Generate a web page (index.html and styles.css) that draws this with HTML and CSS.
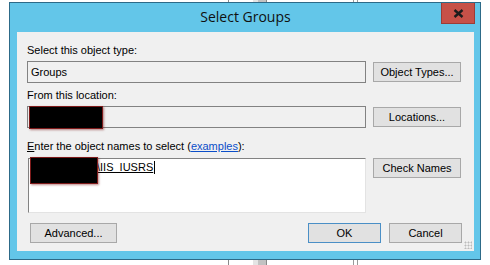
FILE: index.html
```html
<!DOCTYPE html>
<html lang="en">
  <head>
    <meta charset="UTF-8" />
    <meta name="viewport" content="width=device-width, initial-scale=1.0" />
    <title>Select Groups</title>
    <link rel="stylesheet" href="styles.css">
  </head>
  <body>
    <div class="ventana">
      <div class="titulo">
        <span class="titulo-texto">Select Groups</span>
        <button class="cerrar" title="Close">
          <svg width="11" height="9" viewBox="0 0 11 9">
            <path d="M1.5 1 L9.5 8 M9.5 1 L1.5 8" stroke="#1c1c1c" stroke-width="2.4" fill="none" />
          </svg>
        </button>
      </div>
      <div class="cliente">
        <label class="etiqueta">Select this object type:</label>
        <div class="fila">
          <div class="campo">Groups</div>
          <button class="boton"><u>O</u>bject Types...</button>
        </div>

        <label class="etiqueta etiqueta-2">From this location:</label>
        <div class="fila">
          <div class="campo">
            <span class="tapa tapa-1"></span>
          </div>
          <button class="boton"><u>L</u>ocations...</button>
        </div>

        <label class="etiqueta etiqueta-3"><u>E</u>nter the object names to select (<a href="#">examples</a>):</label>
        <div class="fila fila-nombres">
          <div class="nombres">
            <span class="nombre">\IIS_IUSRS</span><span class="cursor"></span>
            <span class="tapa tapa-2"></span>
          </div>
          <button class="boton"><u>C</u>heck Names</button>
        </div>

        <div class="acciones">
          <button class="boton boton-avanzado"><u>A</u>dvanced...</button>
          <div class="acciones-der">
            <button class="boton boton-ok">OK</button>
            <button class="boton boton-cancelar">Cancel</button>
          </div>
        </div>
        <span class="agarre"></span>
      </div>
    </div>
  </body>
</html>
```

FILE: styles.css
```css
:root {
  --azul: #63c6e9;
  --fondo: #f0f0f0;
  --borde-campo: #828282;
  --texto: #000000;
}

html {
  box-sizing: border-box;
  font-size: 11px;
}

*,
*::before,
*::after {
  box-sizing: border-box;
}

body {
  margin: 0;
  height: 265px;
  overflow: hidden;
  color: var(--texto);
  font-family: "Liberation Sans", Arial, sans-serif;
  background-color: #ffffff;
  background-image:
    linear-gradient(to right,
      transparent 228px, #8a8a8a 228px, #8a8a8a 229px, transparent 229px,
      transparent 253px, #e4e4e4 253px, #e4e4e4 258px, #c2c2c2 258px, #c2c2c2 266px, #8a8a8a 266px, #8a8a8a 267px, transparent 267px,
      transparent 353px, #9a9a9a 353px, #9a9a9a 354px, transparent 354px,
      transparent 357px, #9a9a9a 357px, #9a9a9a 358px, transparent 358px);
}

.ventana {
  margin: 2px 0 0 9px;
  width: 472px;
  height: 258px;
  background: var(--azul);
  border: 1px solid #2d6a88;
  padding: 0 6px 8px 7px;
  display: flex;
  flex-direction: column;
}

.titulo {
  position: relative;
  height: 29px;
  display: flex;
  align-items: center;
  justify-content: center;
}

.titulo-texto {
  font-family: "Open Sans", "Noto Sans", sans-serif;
  font-size: 14px;
  color: #101010;
  margin-top: -2px;
}

.cerrar {
  position: absolute;
  top: 0;
  right: -1px;
  width: 34px;
  height: 21px;
  border: 1px solid #9c3c36;
  border-top: none;
  background: #c65148;
  padding: 0;
  display: flex;
  align-items: center;
  justify-content: center;
}

.cliente {
  position: relative;
  flex: 1;
  background: var(--fondo);
  padding: 12px 12px 0 10px;
}

.etiqueta {
  display: block;
  height: 13px;
  line-height: 13px;
  margin-bottom: 4px;
}

.etiqueta-2 {
  margin-top: 6px;
}

.etiqueta-3 {
  margin-top: 12px;
  margin-bottom: 5px;
}

.etiqueta a {
  color: #0b4ec9;
}

.fila {
  display: flex;
  gap: 7px;
  align-items: flex-start;
}

.campo {
  position: relative;
  width: 339px;
  height: 22px;
  border: 1px solid var(--borde-campo);
  line-height: 20px;
  padding-left: 3px;
}

.boton {
  font-family: inherit;
  font-size: 11px;
  color: var(--texto);
  width: 88px;
  height: 20px;
  margin-top: 1px;
  padding: 0;
  background: #e1e1e1;
  border: 1px solid #a8a8a8;
  line-height: 18px;
}

.boton u {
  text-decoration: none;
}

.nombres {
  position: relative;
  width: 338px;
  height: 55px;
  margin-left: 1px;
  background: #ffffff;
  border-top: 1px solid #828282;
  border-left: 1px solid #828282;
  border-right: 1px solid #e3e3e3;
  border-bottom: 1px solid #e3e3e3;
  padding: 2px 0 0 68px;
  line-height: 13px;
}

.fila-nombres .boton {
  margin-top: 0;
}

.nombre {
  text-decoration: underline;
}

.cursor {
  display: inline-block;
  width: 1px;
  height: 13px;
  margin-left: 1px;
  vertical-align: top;
  background: #000;
}

.tapa {
  position: absolute;
  background: #000;
  border: 1px solid #7d1a1a;
  box-shadow: 1px 1px 2px rgba(120, 20, 20, 0.5);
}

.tapa-1 {
  left: 1px;
  top: -1px;
  width: 74px;
  height: 23px;
}

.tapa-2 {
  left: 1px;
  top: -2px;
  width: 68px;
  height: 27px;
}

.acciones {
  display: flex;
  justify-content: space-between;
  margin-top: 10px;
  padding-left: 3px;
}

.acciones .boton {
  margin-top: 0;
}

.boton-avanzado {
  width: 87px;
}

.acciones-der {
  display: flex;
  gap: 8px;
}

.boton-ok,
.boton-cancelar {
  width: 73px;
}

.boton-ok {
  border-color: #4a8fc6;
}

.agarre {
  position: absolute;
  right: 2px;
  bottom: 2px;
  width: 8px;
  height: 8px;
  background-image: radial-gradient(circle, #bcbcbc 0.8px, transparent 1.2px);
  background-size: 3px 3px;
}
```
